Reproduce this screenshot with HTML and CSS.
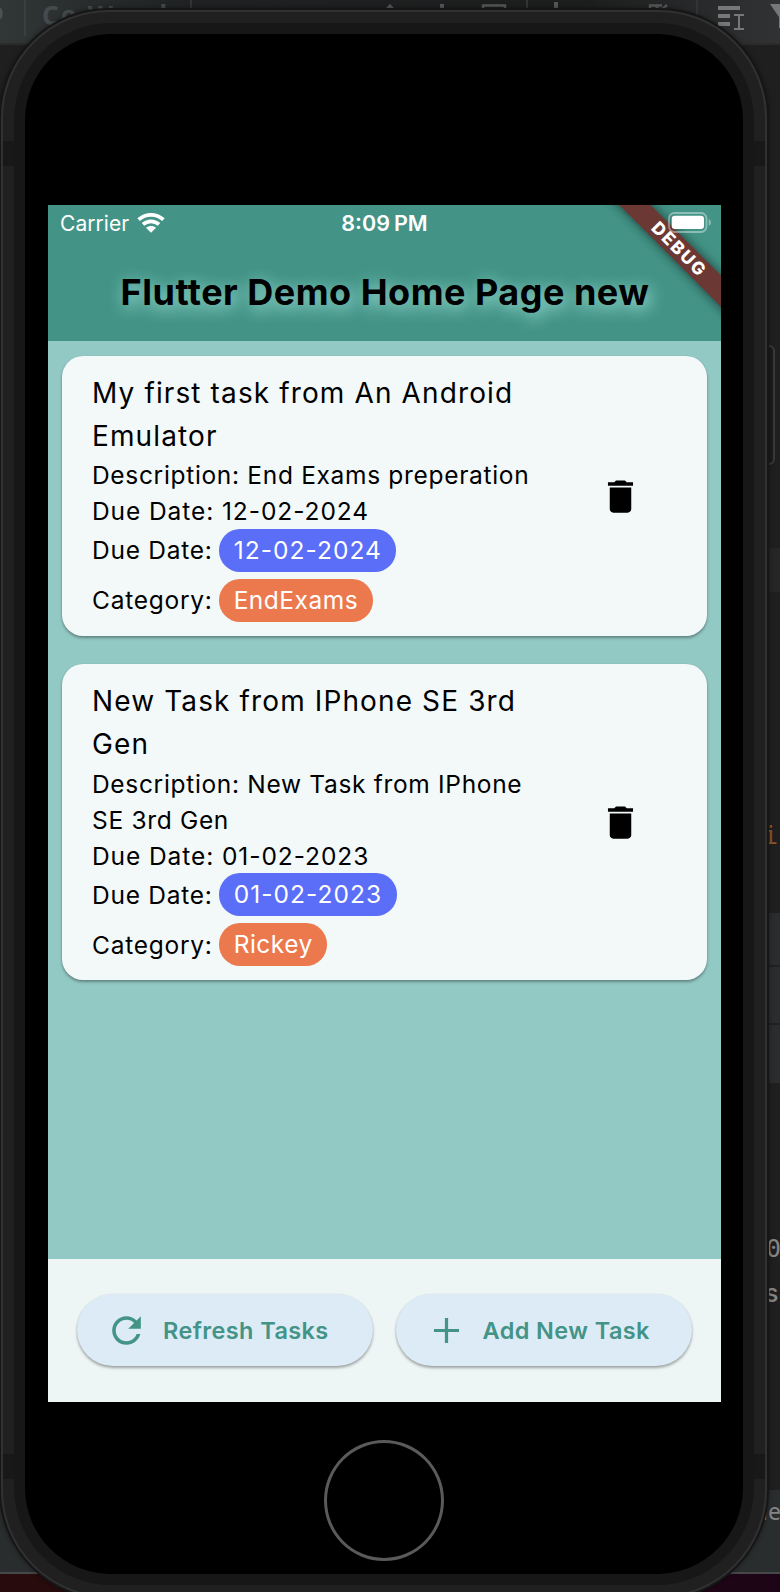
FILE: index.html
```html
<!DOCTYPE html>
<html lang="en">
<head>
<meta charset="utf-8">
<title>Flutter Demo Home Page new</title>
<link rel="stylesheet" href="styles.css">
</head>
<body>
<div class="editor">
  <div class="toolbar">
    <span class="tb-word">Co Wand</span>
    <span class="tb-word second">Consult</span>
    <svg class="tb-icons" width="780" height="44" viewBox="0 0 780 44">
      <path d="M-4 7C3 9 3 18-4 20" fill="none" stroke="#4c5152" stroke-width="3"/>
      <path d="M25 0V36" stroke="#3c3f40" stroke-width="2"/>
      <path d="M191 0V12M527 0V14M697 0V15" stroke="#323536" stroke-width="2"/>
      <path d="M383 11L390 4L397 11Z" fill="#555858"/>
      <g stroke="#555858" fill="none">
        <path stroke-width="4" d="M442 4V12M556 2V10M546 11H566M598 11H618"/>
        <path stroke-width="2.500" d="M483 12V5.500H505V12M650 12V5.500H662M656 6L660 11L667 5"/>
      </g>
      <path d="M718 6H740V10H718ZM718 14H730V18H718ZM718 22H730V26H718ZM734 14H744V16H740V28H744V30H734V28H738V16H734Z" fill="#777879"/>
      <path d="M770 4H790V8L783 16V28H779V17Z" fill="#77787a"/>
    </svg>
  </div>
  <div class="band band-a"></div>
  <div class="band band-b"></div>
  <div class="status"></div>
  <div class="desktop"></div>
  <span class="code orange">i</span>
  <span class="code zero">0</span>
  <span class="code ess">s</span>
  <span class="code le">le</span>
  <div class="power"></div>
</div>

<div class="phone">
  <div class="notches"></div>
  <div class="rim">
    <div class="glass">
      <main class="screen">
        <header class="appbar">
          <div class="statusbar">
            <div class="carrier">
              <span>Carrier</span>
              <svg class="wifi" width="28" height="20" viewBox="0 0 28 20">
                <g fill="none" stroke="#fff" stroke-width="3.7">
                  <path d="M1.6 6.7C8.7.2 19.3.2 26.4 6.7"/>
                  <path d="M6 11.4C10.6 7.3 17.4 7.3 22 11.4"/>
                </g>
                <path d="M9 14.7C11.9 12.3 16.1 12.3 19 14.7L14 19.8Z" fill="#fff"/>
              </svg>
            </div>
            <div class="clock"><span>8:09</span><span>PM</span></div>
          </div>
          <h1 class="title">Flutter Demo Home Page new</h1>
        </header>
        <div class="ribbon">DEBUG</div>
        <svg class="battery" width="44" height="22" viewBox="0 0 44 22">
          <rect x="1" y="1" width="37.5" height="19" rx="5.5" fill="none" stroke="#fff" stroke-opacity=".4" stroke-width="1.8"/>
          <rect x="3.7" y="3.7" width="32.3" height="13.3" rx="3.2" fill="#fff"/>
          <path d="M40.8 7C43.6 8.3 43.6 12.6 40.8 14Z" fill="#fff" fill-opacity=".4"/>
        </svg>

        <section class="list">
          <article class="card">
            <div class="info">
              <h2 class="name">My first task from An Android<br>Emulator</h2>
              <p class="line desc">Description: End Exams preperation</p>
              <p class="line due">Due Date: 12-02-2024</p>
              <p class="row"><span>Due Date:</span><span class="pill date">12-02-2024</span></p>
              <p class="row"><span>Category:</span><span class="pill cat">EndExams</span></p>
            </div>
            <svg class="trash" width="43" height="43" viewBox="0 0 24 24"><path d="M6 19c0 1.1.9 2 2 2h8c1.1 0 2-.9 2-2V7H6v12zM19 4h-3.500l-1-1h-5l-1 1H5v2h14V4z"/></svg>
          </article>
          <article class="card">
            <div class="info">
              <h2 class="name">New Task from IPhone SE 3rd<br>Gen</h2>
              <p class="line desc">Description: New Task from IPhone<br>SE 3rd Gen</p>
              <p class="line due">Due Date: 01-02-2023</p>
              <p class="row"><span>Due Date:</span><span class="pill date">01-02-2023</span></p>
              <p class="row"><span>Category:</span><span class="pill cat">Rickey</span></p>
            </div>
            <svg class="trash" width="43" height="43" viewBox="0 0 24 24"><path d="M6 19c0 1.1.9 2 2 2h8c1.1 0 2-.9 2-2V7H6v12zM19 4h-3.500l-1-1h-5l-1 1H5v2h14V4z"/></svg>
          </article>
        </section>

        <footer class="actions">
          <button class="btn">
            <svg width="43" height="43" viewBox="0 0 24 24"><path d="M17.650 6.350C16.200 4.900 14.210 4 12 4c-4.420 0-7.990 3.580-7.990 8s3.570 8 7.990 8c3.730 0 6.840-2.550 7.730-6h-2.080c-.82 2.330-3.040 4-5.650 4-3.310 0-6-2.690-6-6s2.690-6 6-6c1.660 0 3.140.69 4.220 1.780L13 11h7V4l-2.350 2.350z"/></svg>
            <span>Refresh Tasks</span>
          </button>
          <button class="btn">
            <svg width="43" height="43" viewBox="0 0 24 24"><path d="M19 12.900h-6.100v6.100h-1.800v-6.100H5v-1.800h6.100V5h1.800v6.100h6.100v1.800z"/></svg>
            <span>Add New Task</span>
          </button>
        </footer>
      </main>
      <div class="home"></div>
    </div>
  </div>
</div>
</body>
</html>
```

FILE: styles.css
```css
* { box-sizing: border-box; }
html, body { margin: 0; padding: 0; }
body {
  position: relative;
  width: 780px;
  height: 1592px;
  overflow: hidden;
  background: #1f1f1f;
  font-family: Inter, "Liberation Sans", sans-serif;
}
h1, h2, p { margin: 0; font-weight: 400; }

/* editor window behind the simulator */
.editor { position: absolute; inset: 0; overflow: hidden; }
.toolbar {
  position: relative;
  height: 45px;
  background: linear-gradient(90deg, #313637, #1f2122 25%, #1c1e1e 75%, #303233);
  border-bottom: 2px solid #2b2b2b;
  overflow: hidden;
}
.tb-icons { position: absolute; left: 0; top: 0; }
.tb-word {
  position: absolute;
  left: 42px;
  top: 0;
  font: 700 26px/30px "Noto Sans", sans-serif;
  letter-spacing: 2px;
  color: #454b4d;
}
.tb-word.second { left: 243px; top: 0; font-size: 22px; font-weight: 400; color: #555; }
.band { position: absolute; left: 764px; right: 0; background: #262626; }
.band-a { top: 548px; height: 44px; }
.band-b {
  top: 913px;
  height: 170px;
  background: linear-gradient(#2a2c2e 52px, #202122 52px 54px, #2a2c2e 54px 110px, #202122 110px 112px, #2a2c2e 112px);
}
.status { position: absolute; left: 0; right: 0; top: 1490px; height: 84px; background: #2a2d2e; border-bottom: 2px solid #454748; }
.desktop { position: absolute; left: 0; right: 0; top: 1574px; bottom: 0; background: linear-gradient(90deg, #280c0d, #1d0517); }
.code { position: absolute; font: 25px/30px "DejaVu Sans Mono", monospace; color: #858585; }
.orange { left: 763px; top: 821px; color: #8a5526; }
.zero { left: 766px; top: 1234px; font-size: 25px; }
.ess { left: 765px; top: 1278px; font-family: Inter, sans-serif; font-weight: 500; }
.le { left: 762px; top: 1496px; font: 23px/30px "Noto Sans", sans-serif; }
.power {
  position: absolute;
  left: 758px;
  top: 345px;
  width: 17px;
  height: 120px;
  border: 2px solid #393939;
  border-radius: 6px;
  background: #1b1b1b;
}

/* device body */
.phone {
  position: absolute;
  left: 1px;
  top: 10px;
  width: 766px;
  height: 1588px;
  padding: 11px;
  border: 2px solid #313131;
  border-radius: 108px;
  background: #202020;
  box-shadow: 0 0 0 2px #161616, 0 0 5px 2px #0006;
}
.notches {
  position: absolute;
  inset: 0;
  border-radius: 106px;
  background:
    linear-gradient(#181818, #181818) 0 129px / 100% 25px no-repeat,
    linear-gradient(#181818, #181818) 0 1442px / 100% 25px no-repeat;
}
.rim {
  position: relative;
  height: 100%;
  padding: 11px;
  border-radius: 97px;
  background: #171717;
}
.glass {
  height: 100%;
  padding: 171px 22px 0 23px;
  border-radius: 86px;
  background: #000;
}
.home {
  width: 120px;
  height: 121px;
  margin: 38px auto 0 276px;
  border: 3px solid #5a5a5a;
  border-radius: 50%;
}

/* app */
.screen {
  position: relative;
  display: flex;
  flex-direction: column;
  height: 1197px;
  background: #92c9c4;
  overflow: hidden;
}
.appbar { height: 136px; background: #439487; color: #fff; }
.statusbar {
  display: grid;
  grid-template-columns: 1fr auto 1fr;
  align-items: center;
  height: 36px;
  padding: 0 12px;
}
.carrier { display: flex; align-items: center; gap: 8px; font-size: 21px; letter-spacing: .05px; }
.clock { display: flex; gap: 4px; font-size: 21.500px; font-weight: 600; }
.title {
  margin-top: 28px;
  padding-left: 1px;
  text-align: center;
  font-size: 36px;
  line-height: 46px;
  font-weight: 700;
  letter-spacing: .5px;
  color: #000;
  white-space: nowrap;
  text-shadow: 3px 4px 16px #a5e6dd;
}
.ribbon {
  position: absolute;
  left: 530px;
  top: 31.500px;
  width: 200px;
  height: 21.500px;
  padding-left: 4px;
  transform: rotate(45deg);
  background: #6c3834;
  box-shadow: 0 0 12px #0009;
  color: #fff;
  font-size: 17.500px;
  line-height: 21.500px;
  font-weight: 800;
  letter-spacing: 1.800px;
  text-align: center;
}
.battery { position: absolute; left: 620px; top: 7px; }

.list { flex: 1; padding: 14.500px 14.500px 0 14px; }
.card {
  display: flex;
  align-items: center;
  justify-content: space-between;
  margin-bottom: 28.500px;
  padding: 16px 65px 14px 30px;
  border-radius: 21px;
  background: #f3f9f9;
  box-shadow: 0 2px 3px #0005, 0 0 2px #0001;
}
.name { font-size: 28px; line-height: 43px; letter-spacing: 1.120px; white-space: nowrap; }
.line { font-size: 24.500px; line-height: 36px; letter-spacing: .680px; white-space: nowrap; }
.desc { margin-top: -.500px; }
.due { letter-spacing: .920px; }
.row { display: flex; align-items: center; gap: 6.500px; height: 43px; font-size: 24.500px; letter-spacing: .750px; }
.due + .row { margin-top: -.500px; }
.row + .row { margin-top: 7px; }
.pill { height: 43px; line-height: 43px; padding: 0 14.500px; border-radius: 21px; color: #fff; }
.date { background: #5b6ef7; letter-spacing: 1.050px; }
.cat { background: #ec794e; letter-spacing: .500px; }
.info, .trash { flex: none; }
.trash { margin-top: -1px; }

.actions {
  display: flex;
  gap: 23.500px;
  height: 143.500px;
  padding: 35.500px 29px 36px 28.500px;
  background: #edf5f5;
}
.btn {
  display: flex;
  align-items: center;
  flex: 1;
  height: 72px;
  gap: 15px;
  padding: 0 0 0 28.500px;
  border: 0;
  border-radius: 36px;
  background: #dcebf6;
  box-shadow: 0 2px 3px #0005, 0 0 2px #0001;
  color: #439487;
  font: 600 23.500px Inter, sans-serif;
  letter-spacing: .400px;
  white-space: nowrap;
}
.btn svg { flex: none; fill: #439487; }
```
